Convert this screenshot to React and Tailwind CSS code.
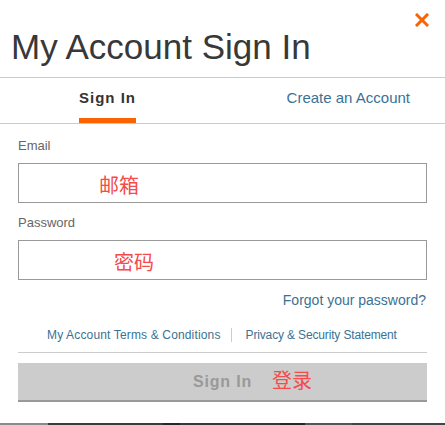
import React from "react";

const font = { fontFamily: '"Liberation Sans", Arial, "Noto Sans CJK SC", sans-serif' };

const CloseIcon = () => (
  <svg width="14" height="14" viewBox="0 0 14 14" className="block">
    <path d="M2 2 L12 12 M12 2 L2 12" stroke="#f96302" strokeWidth="3" strokeLinecap="square" />
  </svg>
);

const Field = ({ label, hint, hintPad, labelGap }) => (
  <div className={labelGap}>
    <label className="block text-[13px] leading-[15px] text-[#666]">{label}</label>
    <div className={`mt-[10px] h-[40px] border border-[#999] flex items-center pt-[5px] ${hintPad}`}>
      <span className="text-[20px] leading-none text-[#f54b4b]">{hint}</span>
    </div>
  </div>
);

export default function App() {
  return (
    <div
      className="w-[445px] h-[425px] bg-white relative overflow-hidden flex flex-col"
      style={font}
    >
      {/* Header */}
      <div className="relative pt-[27px] pb-[10px] border-b border-[#ccc]">
        <button className="absolute top-[13px] right-[16px]">
          <CloseIcon />
        </button>
        <h1 className="pl-[11px] text-[35px] leading-[40px] text-[#383838] font-normal">
          My Account Sign In
        </h1>
      </div>

      {/* Tabs */}
      <div className="flex items-start h-[46px] border-b border-[#ccc]">
        <div className="ml-[79px] pt-[11px] flex flex-col h-full">
          <span className="text-[15px] leading-[18px] font-bold tracking-[1px] text-[#333]">Sign In</span>
          <span className="mt-auto h-[5px] bg-[#f96302]" />
        </div>
        <span className="ml-auto mr-[35px] pt-[11px] text-[15px] leading-[18px] text-[#3a7294]">
          Create an Account
        </span>
      </div>

      {/* Form */}
      <div className="px-[18px]">
        <Field label="Email" hint="邮箱" hintPad="pl-[80px]" labelGap="mt-[14px]" />
        <Field label="Password" hint="密码" hintPad="pl-[95px]" labelGap="mt-[12px]" />

        <div className="mt-[12px] text-right text-[14px] leading-[16px] text-[#3a7294] pr-px">
          Forgot your password?
        </div>

        <div className="mt-[20px] pl-[29px] flex items-center text-[12px] leading-[14px] text-[#3a7294]">
          <span className="tracking-[0.15px]">My Account Terms &amp; Conditions</span>
          <span className="ml-[10px] mr-[14px] w-px h-[14px] bg-[#ccc]" />
          <span className="tracking-[-0.15px]">Privacy &amp; Security Statement</span>
        </div>

        <div className="mt-[10px] h-px bg-[#ccc]" />

        <div className="mt-[10px] relative h-[39px] bg-[#ccc] border-b-2 border-[#999] flex items-center justify-center">
          <span className="text-[16px] font-bold tracking-[0.8px] text-[#999]">Sign In</span>
          <span className="absolute left-[254px] top-[8px] text-[20px] leading-none text-[#f54b4b]">登录</span>
        </div>
      </div>

      {/* Bottom strip */}
      <div className="mt-auto flex h-[2px]">
        <div className="w-[48px] bg-[#8a8a8a]" />
        <div className="w-[115px] bg-[#3c3c3c]" />
        <div className="w-[17px] bg-[#262626]" />
        <div className="w-[100px] bg-[#383838]" />
        <div className="w-[25px] bg-[#262626]" />
        <div className="w-[47px] bg-[#555]" />
        <div className="flex-1 bg-[#444]" />
      </div>
    </div>
  );
}
